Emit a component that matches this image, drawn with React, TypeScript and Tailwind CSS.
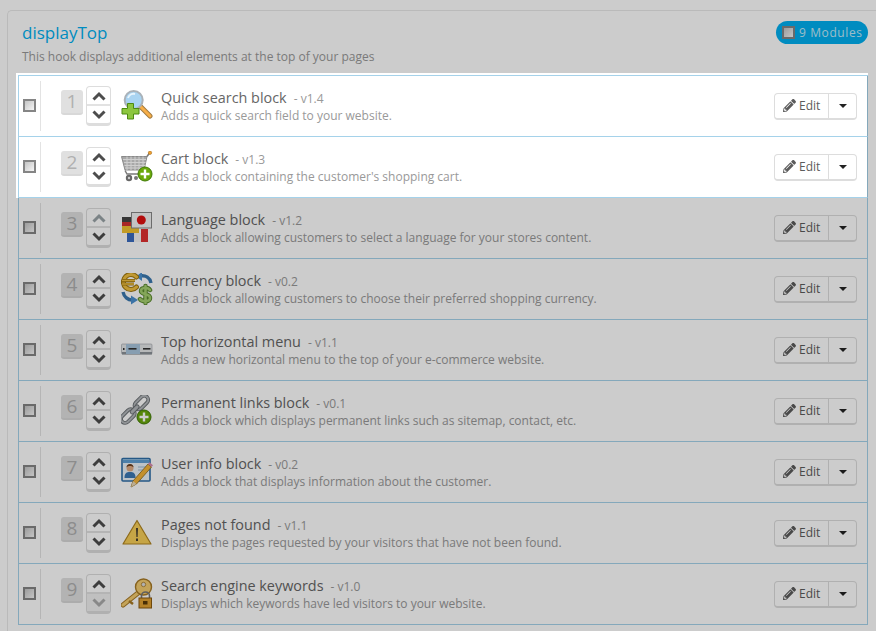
import { FaPencilAlt } from "react-icons/fa";

function GreenPlus({ cx, cy, r = 7 }: { cx: number; cy: number; r?: number }) {
  return (
    <g>
      <circle cx={cx} cy={cy} r={r} fill="#6aa80a" stroke="#3f7a05" strokeWidth="1" />
      <path d={`M${cx - r + 2.5} ${cy}H${cx + r - 2.5}M${cx} ${cy - r + 2.5}V${cy + r - 2.5}`} stroke="#fff" strokeWidth="2.4" />
    </g>
  );
}

function SearchIcon() {
  return (
    <svg width="32" height="32" viewBox="0 0 32 32">
      <path d="M20 17L29 26" stroke="#a07a40" strokeWidth="5" strokeLinecap="round" />
      <path d="M20 17L29 26" stroke="#f7ae48" strokeWidth="3" strokeLinecap="round" />
      <circle cx="12.700" cy="10" r="9" fill="#a9d4f2" stroke="#aab2b9" strokeWidth="2" />
      <path d="M7 8a6 6 0 0 1 7-4" stroke="#e6f4fd" strokeWidth="2" fill="none" />
      <path d="M6.500 13.500h6v5h5.500v5.500h-5.500v5h-6v-5H1v-5.500h5.500z" fill="#8cc63f" stroke="#4c8a12" strokeWidth="1" />
    </svg>
  );
}

function CartIcon() {
  return (
    <svg width="32" height="32" viewBox="0 0 32 32">
      <path d="M0.500 5.500H26L23 19H4z" fill="#a8a8a8" stroke="#8a8a8a" strokeWidth="1" />
      <path d="M2 8.500H25M3 11.500H24.500M3.500 14.500H24M4 17H23.500M6 5.500V19M10 5.500V19M14 5.500V19M18 5.500V19M22 5.500V19" stroke="#cfcfcf" strokeWidth="1" />
      <path d="M4 19.500L6 23H20M26 5.500L28.500 2" stroke="#7a7a7a" strokeWidth="1.500" fill="none" />
      <circle cx="29" cy="1.800" r="1.700" fill="#f0a030" stroke="#a87020" strokeWidth="0.600" />
      <circle cx="8" cy="27" r="3.200" fill="#666" />
      <circle cx="8" cy="27" r="1.200" fill="#ccc" />
      <circle cx="15" cy="27" r="2" fill="#777" />
      <GreenPlus cx={24} cy={23} r={7} />
    </svg>
  );
}

function LanguageIcon() {
  return (
    <svg width="32" height="32" viewBox="0 0 32 32">
      <rect x="1" y="5" width="17" height="6" fill="#444" />
      <rect x="1" y="10" width="17" height="5" fill="#d43030" />
      <rect x="1" y="14" width="17" height="7" fill="#f2c230" />
      <rect x="6" y="21" width="7" height="9" fill="#3a6cc0" />
      <rect x="13" y="21" width="7" height="9" fill="#f4f4f4" />
      <rect x="20" y="17" width="7" height="13" fill="#e03030" />
      <rect x="10.500" y="0.500" width="20" height="15.500" fill="#f4f4f4" stroke="#888" strokeWidth="1" />
      <circle cx="20.300" cy="8" r="4.500" fill="#e01010" />
    </svg>
  );
}

function CurrencyIcon() {
  return (
    <svg width="32" height="32" viewBox="0 0 32 32" fill="none">
      <path d="M30 10C29 5 25 2 19 3" stroke="#3a78b0" strokeWidth="3.400" />
      <path d="M21 -1L15 3.500L21 8z" fill="#4a90d0" />
      <path d="M2 19C3 24 7 27 11 27" stroke="#3a78b0" strokeWidth="3.400" />
      <path d="M10 22.500L17 27L10 31.500z" fill="#4a90d0" />
      <path d="M15.500 4A7.500 7.500 0 1 0 15.500 14" stroke="#a07810" strokeWidth="5" strokeLinecap="round" />
      <path d="M15.500 4A7.500 7.500 0 1 0 15.500 14" stroke="#f0c040" strokeWidth="3" strokeLinecap="round" />
      <path d="M1 7.500H14M1 11H13" stroke="#a07810" strokeWidth="3" />
      <path d="M1 7.500H14M1 11H13" stroke="#f0c040" strokeWidth="1.500" />
      <path d="M29 17C27 14 20 14 20 18C20 22 29 20 29 25C29 29 21 29 19 26M24.500 13V30" stroke="#5c8a30" strokeWidth="4.500" strokeLinecap="round" />
      <path d="M29 17C27 14 20 14 20 18C20 22 29 20 29 25C29 29 21 29 19 26M24.500 13V30" stroke="#a6d070" strokeWidth="2.500" strokeLinecap="round" />
    </svg>
  );
}

function MenuIcon() {
  return (
    <svg width="32" height="32" viewBox="0 0 32 32">
      <rect x="0.500" y="10" width="30.500" height="10" rx="1" fill="#e4e6e8" stroke="#9aa0a6" strokeWidth="0.600" />
      <rect x="1" y="18" width="30" height="2.500" fill="#8d9399" />
      <rect x="5" y="10" width="14" height="10" fill="#a9c6de" />
      <rect x="2" y="14" width="1.500" height="2" fill="#333" />
      <rect x="7.500" y="14" width="8" height="1.600" fill="#333" />
      <rect x="22" y="14" width="7.500" height="1.600" fill="#333" />
    </svg>
  );
}

function LinkIcon() {
  return (
    <svg width="32" height="32" viewBox="0 0 32 32" fill="none">
      <g transform="rotate(-45 14 14)">
        <rect x="-4" y="10" width="16" height="8" rx="4" stroke="#6a6f73" strokeWidth="3.800" />
        <rect x="-4" y="10" width="16" height="8" rx="4" stroke="#b4b8bc" strokeWidth="2" />
        <rect x="15" y="10" width="16" height="8" rx="4" stroke="#6a6f73" strokeWidth="3.800" />
        <rect x="15" y="10" width="16" height="8" rx="4" stroke="#b4b8bc" strokeWidth="2" />
        <rect x="8" y="12" width="11" height="4" rx="2" fill="#b4b8bc" stroke="#6a6f73" strokeWidth="1" />
      </g>
      <GreenPlus cx={23} cy={22} r={7} />
    </svg>
  );
}

function UserIcon() {
  return (
    <svg width="32" height="32" viewBox="0 0 32 32">
      <rect x="1" y="2.500" width="28" height="22.500" rx="1" fill="#eaf3fb" stroke="#2f6fa8" strokeWidth="1.600" />
      <rect x="2" y="3.500" width="26" height="3.500" fill="#5f9fd4" />
      <circle cx="9" cy="12" r="3.500" fill="#e0ac84" />
      <path d="M5.500 11.500a3.500 3.500 0 0 1 7 0c-1-2-6-2-7 0z" fill="#6a3f20" />
      <path d="M3.500 22c0-5 2-6 5.500-6s5.500 1 5.500 6z" fill="#3b78b4" />
      <path d="M17 11H25M17 14H22" stroke="#9bb8d0" strokeWidth="1" />
      <path d="M10 31L12 25L27 8L30.500 11L15.500 28z" fill="#f4b53a" stroke="#8a6a20" strokeWidth="0.800" />
      <path d="M27 8L28.500 6.300L32 9.300L30.500 11z" fill="#d98cb0" />
      <path d="M10 31L12 25L15.500 28z" fill="#e9d9b8" />
    </svg>
  );
}

function WarningIcon() {
  return (
    <svg width="32" height="32" viewBox="0 0 32 32">
      <path d="M16 3.500L30 27H2z" fill="#f8cf58" stroke="#b08420" strokeWidth="1.200" strokeLinejoin="round" />
      <path d="M15 11H17L16.600 20H15.400z" fill="#4a4030" />
      <rect x="15" y="21.500" width="2" height="2.500" fill="#4a4030" />
    </svg>
  );
}

function KeyIcon() {
  return (
    <svg width="32" height="32" viewBox="0 0 32 32" fill="none">
      <path d="M17 15L2 27" stroke="#a87a26" strokeWidth="5" strokeLinecap="round" />
      <path d="M17 15L2 27" stroke="#f4cc70" strokeWidth="3" strokeLinecap="round" />
      <path d="M8 23L12 26" stroke="#a87a26" strokeWidth="2.500" />
      <circle cx="22.500" cy="9" r="8" fill="#f4cc70" stroke="#a87a26" strokeWidth="1.400" />
      <circle cx="22.500" cy="6.500" r="2.200" fill="#dcdcdc" stroke="#a87a26" strokeWidth="0.800" />
      <path d="M20.500 20V18a4 4 0 0 1 8 0v2" stroke="#777" strokeWidth="1.600" />
      <rect x="18" y="20" width="12.500" height="10" fill="#e2a232" stroke="#8a5a10" strokeWidth="1" />
      <rect x="22" y="23" width="4.500" height="3.500" fill="#5a3a08" />
    </svg>
  );
}

function Chev({ up }: { up?: boolean }) {
  return (
    <svg width="14" height="10" viewBox="0 0 14 10" fill="none" stroke="currentColor" strokeWidth="3">
      <path d={up ? "M1.500 8.500L7 3L12.500 8.500" : "M1.500 1.500L7 7L12.500 1.500"} />
    </svg>
  );
}

const modules = [
  { n: 1, title: "Quick search block", v: "v1.4", desc: "Adds a quick search field to your website.", Icon: SearchIcon },
  { n: 2, title: "Cart block", v: "v1.3", desc: "Adds a block containing the customer's shopping cart.", Icon: CartIcon },
  { n: 3, title: "Language block", v: "v1.2", desc: "Adds a block allowing customers to select a language for your stores content.", Icon: LanguageIcon },
  { n: 4, title: "Currency block", v: "v0.2", desc: "Adds a block allowing customers to choose their preferred shopping currency.", Icon: CurrencyIcon },
  { n: 5, title: "Top horizontal menu", v: "v1.1", desc: "Adds a new horizontal menu to the top of your e-commerce website.", Icon: MenuIcon },
  { n: 6, title: "Permanent links block", v: "v0.1", desc: "Adds a block which displays permanent links such as sitemap, contact, etc.", Icon: LinkIcon },
  { n: 7, title: "User info block", v: "v0.2", desc: "Adds a block that displays information about the customer.", Icon: UserIcon },
  { n: 8, title: "Pages not found", v: "v1.1", desc: "Displays the pages requested by your visitors that have not been found.", Icon: WarningIcon },
  { n: 9, title: "Search engine keywords", v: "v1.0", desc: "Displays which keywords have led visitors to your website.", Icon: KeyIcon },
];

function Check() {
  return (
    <input
      type="checkbox"
      readOnly
      className="appearance-none block w-[13px] h-[13px] border-2 border-[#858585] bg-gradient-to-br from-[#c4c4c4] to-[#f6f6f6] shrink-0"
    />
  );
}

function Row({ m, lit }: { m: (typeof modules)[number]; lit: boolean }) {
  const Icon = m.Icon;
  return (
    <div
      className={
        lit
          ? "flex items-center h-[61px] border-l border-b border-r border-l-[#a5d2ea] border-b-[#a5d2ea] border-r-[#84a8bb]"
          : "flex items-center h-[61px] border-l border-b border-r border-[#a5d2ea]"
      }
    >
      <div className="ml-[4px] mb-[1px] w-[17px]">
        <Check />
      </div>
      <div className="w-px h-[50px] bg-[#e3e3e3]" />
      <div className="ml-[20px] mb-[7px] w-[22px] h-[25px] flex items-center justify-center rounded-[3px] bg-[#e0e0e0] border-b-2 border-[#d8d8d8] text-[19px] leading-none text-[#b0b0b0] shrink-0">
        {m.n}
      </div>
      <div className="ml-[3px] w-[25px] h-[40px] flex flex-col rounded-[4px] border border-[#dddddd] border-b-[3px] bg-white text-[#4d4d4d] shrink-0">
        <div className={"h-[19px] flex items-center justify-center border-b-2 border-[#e2e2e2] " + (m.n === 3 ? "text-[#9aa4a8]" : "")}>
          <Chev up />
        </div>
        <div className={"flex-1 flex items-center justify-center " + (m.n === 9 ? "bg-[#f0f0f0] text-[#aaaaaa]" : "")}>
          <Chev />
        </div>
      </div>
      <div className="ml-[10px] w-[32px] h-[32px] shrink-0">
        <Icon />
      </div>
      <div className="ml-[8px] flex-1 min-w-0">
        <div className="flex items-baseline h-[18px] leading-[18px]">
          <span className="text-[14.400px] text-[#666]">{m.title}</span>
          <span className="ml-[7px] text-[12px] text-[#999]">- {m.v}</span>
        </div>
        <div className="mt-[1px] text-[12px] leading-[16px] text-[#999]">{m.desc}</div>
      </div>
      <div className="mr-[10px] flex h-[27px] rounded-[4px] border border-[#dddddd] border-b-2 bg-white text-[#5c5c5c] shrink-0">
        <div className="w-[54px] flex items-center pl-[8px] gap-[3px] border-r border-[#dddddd] text-[12px]">
          <FaPencilAlt size={13} className="text-[#5c5c5c]" />
          <span>Edit</span>
        </div>
        <div className="w-[27px] flex items-center justify-center">
          <div className="w-0 h-0 border-x-[4px] border-x-transparent border-t-[4px] border-t-[#222]" />
        </div>
      </div>
    </div>
  );
}

export default function App() {
  return (
    <div className="relative h-[631px] overflow-hidden bg-white pt-[10px] pl-[7px] font-['Open_Sans',sans-serif]">
      <div className="w-[880px] min-h-[640px] border-t border-l border-[#e9e9e9] rounded-tl-[5px] pl-[8px]">
        <div className="flex justify-between w-[852px] h-[62px] pl-[6px]">
          <div>
            <div className="mt-[10px] text-[17px] leading-[24px] text-[#00aff0]">displayTop</div>
            <div className="mt-[4px] text-[12px] leading-[16px] text-[#999]">This hook displays additional elements at the top of your pages</div>
          </div>
          <div className="mt-[10px] h-[23px] w-[92px] shrink-0 flex items-center gap-[4px] pl-[6px] rounded-full bg-[#00aff0] text-[12px] tracking-[0.6px] text-[#c4ecfb]">
            <Check />
            <span>9 Modules</span>
          </div>
        </div>
        <div className="relative z-10 w-[852px] pl-[2px] pt-[2px] bg-white">
          <div className="border-t border-[#a5d2ea]">
            {modules.slice(0, 2).map((m) => (
              <Row key={m.n} m={m} lit />
            ))}
          </div>
        </div>
        <div className="pl-[2px] w-[852px]">
          {modules.slice(2).map((m) => (
            <Row key={m.n} m={m} lit={false} />
          ))}
        </div>
      </div>
      <div className="absolute inset-0 bg-black/20" />
    </div>
  );
}
